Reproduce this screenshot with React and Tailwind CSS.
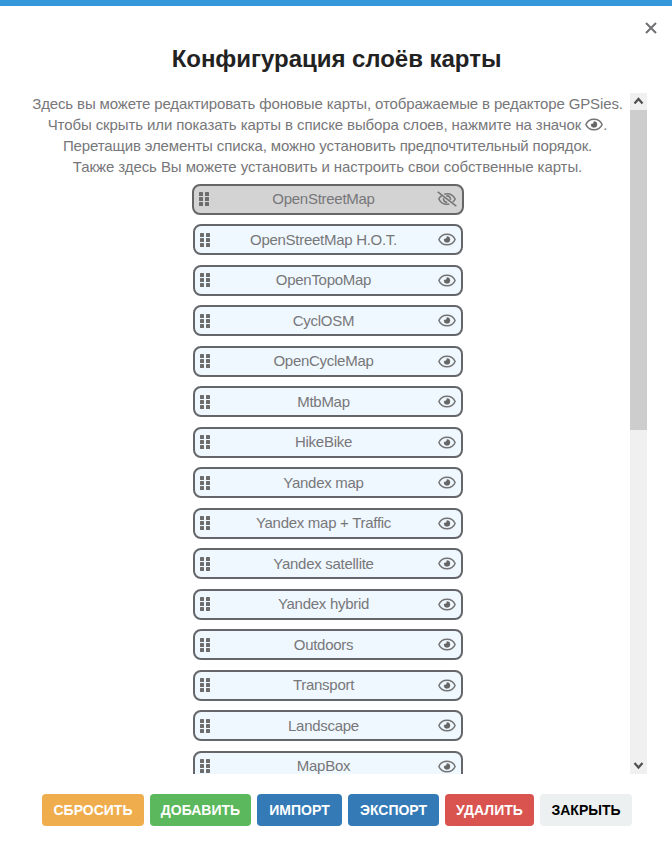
const layers = [
  "OpenStreetMap", "OpenStreetMap H.O.T.", "OpenTopoMap", "CyclOSM", "OpenCycleMap",
  "MtbMap", "HikeBike", "Yandex map", "Yandex map + Traffic", "Yandex satellite",
  "Yandex hybrid", "Outdoors", "Transport", "Landscape", "MapBox",
];

const buttons = [
  ["СБРОСИТЬ", "w-[102px] bg-[#f0ad4e] text-white"],
  ["ДОБАВИТЬ", "w-[101px] bg-[#5cb85c] text-white"],
  ["ИМПОРТ", "w-[85px] bg-[#337ab7] text-white"],
  ["ЭКСПОРТ", "w-[91px] bg-[#337ab7] text-white"],
  ["УДАЛИТЬ", "w-[89px] bg-[#d9534f] text-white"],
  ["ЗАКРЫТЬ", "w-[92px] bg-[#ecf0f1] text-black"],
];

function Grip() {
  return (
    <svg width="11" height="14" viewBox="0 0 11 14" fill="#6c6c6c" className="ml-px shrink-0">
      {[0, 5, 10].map((y) => (
        <g key={y}>
          <rect x="0" y={y} width="4" height="4" rx="0.6" />
          <rect x="6" y={y} width="4" height="4" rx="0.6" />
        </g>
      ))}
    </svg>
  );
}

function Eye({ className = "" }) {
  return (
    <svg width="18" height="13" viewBox="0 0 18 13" fill="none" className={className}>
      <path
        d="M.9 6.500C2.300 3 5.400 1.200 9 1.200s6.700 1.800 8.100 5.300C15.700 10 12.600 11.800 9 11.800S2.300 10 .9 6.500Z"
        stroke="#747475"
        strokeWidth="1.5"
        strokeLinejoin="round"
      />
      <path d="M8.800 3.400a3 3 0 1 1-2.700 2.500c1.300.5 2.900-.8 2.700-2.500Z" fill="#666" stroke="#666" strokeWidth=".3" />
    </svg>
  );
}

function EyeSlash() {
  return (
    <svg width="20" height="16" viewBox="0 0 20 16" fill="none" stroke="#777" strokeWidth="1.6" className="-ml-px mr-px shrink-0">
      <path d="M4.600 4.600C3.400 5.500 2.400 6.600 1.800 8c1.600 3.200 4.700 5.300 8.200 5.300.8 0 1.600-.1 2.300-.3M7.200 3.200c.9-.3 1.800-.5 2.800-.5 3.500 0 6.600 2 8.200 5.300-.6 1.200-1.400 2.200-2.400 3" />
      <path d="M6.500 7.200c-.3 2.300 1.200 4.100 3.700 4.200M9.300 4.900c2.600-.4 4.500 1.500 4.200 3.900" />
      <path d="M.7.800 19.300 15.200" />
    </svg>
  );
}

function Layer({ name, hidden }) {
  return (
    <li
      className={
        hidden
          ? "flex h-[31px] w-[272px] items-center justify-between rounded-lg border-2 border-[#666] bg-[#d3d3d3] pr-1 pl-1"
          : "flex h-[31px] w-[270px] items-center justify-between rounded-lg border-2 border-[#64666a] bg-[#f0f8ff] px-1"
      }
    >
      <Grip />
      <span className="flex-1 pb-px text-center tracking-[-0.28px]">{name}</span>
      {hidden ? <EyeSlash /> : <Eye className="mr-px ml-px shrink-0" />}
    </li>
  );
}

function Chevron({ down }) {
  return (
    <svg width="17" height="17" viewBox="0 0 17 17" fill="none" stroke="#505050" strokeWidth="2.2">
      <path d={down ? "M4.500 6 8.500 10.500 12.500 6" : "M4.500 10.500 8.500 6 12.500 10.500"} />
    </svg>
  );
}

export default function App() {
  return (
    <div className="flex h-[852px] w-[672px] flex-col overflow-hidden border-t-[6px] border-[#3498db] bg-white font-['Liberation_Sans',Arial,sans-serif] text-[#77777a]">
      <header className="flex h-[87px] shrink-0 flex-col">
        <button className="mt-4 mr-[15px] flex h-3 w-3 self-end text-[#707073]" aria-label="Закрыть">
          <svg width="12" height="12" viewBox="0 0 12 12" stroke="currentColor" strokeWidth="2">
            <path d="M1 1 11 11M11 1 1 11" />
          </svg>
        </button>
        <h1 className="mt-2.5 pl-px text-center text-2xl leading-[30px] font-bold tracking-[-0.03px] text-[#222]">
          Конфигурация слоёв карты
        </h1>
      </header>
      <main className="ml-[25px] flex h-[681px] w-[622px] shrink-0">
        <div className="flex w-[605px] flex-col items-center overflow-hidden text-[15px] leading-[21px]">
          <div className="shrink-0 text-center whitespace-nowrap">
            <p className="tracking-[-0.13px]">Здесь вы можете редактировать фоновые карты, отображаемые в редакторе GPSies.</p>
            <p className="tracking-[-0.1px]">
              Чтобы скрыть или показать карты в списке выбора слоев, нажмите на значок{" "}
              <Eye className="-mt-[3px] inline" />.
            </p>
            <p className="tracking-[-0.13px]">Перетащив элементы списка, можно установить предпочтительный порядок.</p>
            <p className="tracking-[-0.08px]">Также здесь Вы можете установить и настроить свои собственные карты.</p>
          </div>
          <ul className="mt-[6.6px] flex shrink-0 flex-col items-center gap-[9.5px]">
            {layers.map((name, i) => (
              <Layer key={name} name={name} hidden={i === 0} />
            ))}
          </ul>
        </div>
        <div className="flex w-[17px] flex-col bg-[#f0f0f0]">
          <Chevron />
          <div className="h-[320px] bg-[#cdcdcd]" />
          <div className="flex-1" />
          <Chevron down />
        </div>
      </main>
      <footer className="mt-5 ml-[42px] flex gap-1.5">
        {buttons.map(([label, style]) => (
          <button key={label} className={`h-8 rounded text-sm font-bold whitespace-nowrap ${style}`}>
            {label}
          </button>
        ))}
      </footer>
    </div>
  );
}
